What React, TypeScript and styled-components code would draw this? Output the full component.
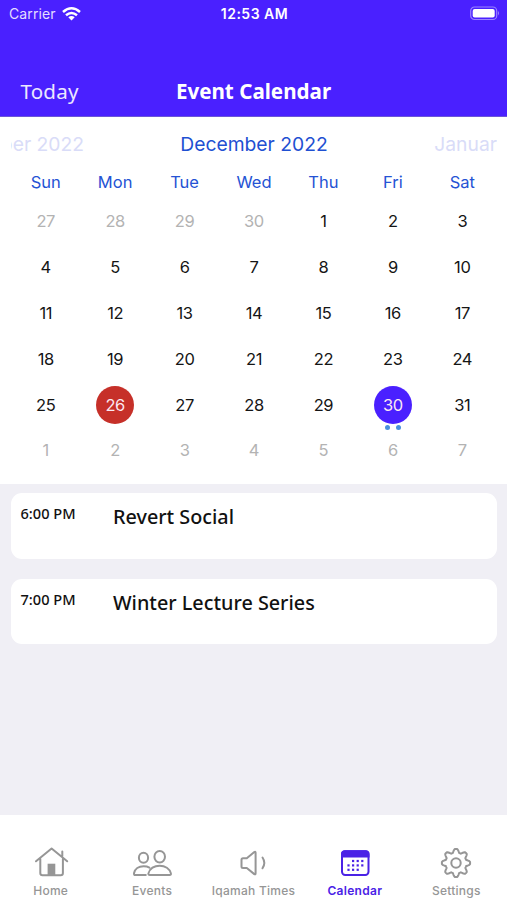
import React from "react";
import styled, { createGlobalStyle } from "styled-components";

const GlobalStyle = createGlobalStyle`
  * { box-sizing: border-box; }
  body { margin: 0; background: #f0eff5; }
`;

const UI = `"Inter", "Liberation Sans", sans-serif`;
const HEAD = `"Noto Sans", "Open Sans", sans-serif`;

const Screen = styled.div`
  width: 507px;
  height: 900px;
  display: flex;
  flex-direction: column;
  background: #f0eff5;
  overflow: hidden;
  font-family: ${UI};
`;

const Header = styled.header`
  height: 117px;
  background: #4a20ff;
  color: #fff;
  border-bottom: 1px solid #6c55d8;
`;

const StatusBar = styled.div`
  height: 27px;
  padding: 0 7px 0 9px;
  display: grid;
  grid-template-columns: 1fr auto 1fr;
  align-items: center;
  font-size: 14px;
  line-height: 27px;
`;

const Carrier = styled.div`
  display: flex;
  align-items: center;
  gap: 6px;
  color: #e4ddff;
  letter-spacing: 0.1px;
`;

const Clock = styled.div`
  font-weight: 600;
  font-size: 14px;
  letter-spacing: 0.5px;
`;

const Battery = styled.svg`
  justify-self: end;
  display: block;
`;

const NavBar = styled.div`
  height: 90px;
  padding: 48px 20px 0;
  display: grid;
  grid-template-columns: 1fr auto 1fr;
  align-items: start;
  font-family: ${HEAD};
  font-size: 20.6px;
  line-height: 32px;
`;

const TodayButton = styled.button`
  justify-self: start;
  border: 0;
  padding: 0 0 0 0.5px;
  background: none;
  color: #ece7ff;
  font: inherit;
  letter-spacing: 0.2px;
`;

const Title = styled.h1`
  margin: 0;
  font-size: inherit;
  line-height: inherit;
  font-weight: 700;
`;

const CalendarPanel = styled.section`
  height: 367px;
  flex: none;
  padding: 0 10px 0 11px;
  background: #fff;
`;

const Months = styled.div`
  height: 54px;
  display: flex;
  align-items: center;
  justify-content: space-between;
  overflow: hidden;
  font-size: 19.3px;
  line-height: 54px;
`;

const Month = styled.div<{ $side?: "left" | "right" }>`
  width: ${(p) => (p.$side ? "73px" : "auto")};
  display: flex;
  justify-content: flex-end;
  overflow: hidden;
  white-space: nowrap;
  color: ${(p) => (p.$side ? "#d9dcf8" : "#1f50d2")};
`;

const WeekdayRow = styled.div`
  display: grid;
  grid-template-columns: repeat(7, 1fr);
  height: 21px;
  align-items: center;
  justify-items: center;
`;

const Weekday = styled.div`
  font-size: 16.5px;
  color: #2553d4;
`;

const Weeks = styled.div`
  padding-top: 6.5px;
  display: grid;
  grid-template-columns: repeat(7, 1fr);
  grid-auto-rows: 45.8px;
  align-items: center;
  justify-items: center;
`;

const Day = styled.div<{ $muted?: boolean; $fill?: string }>`
  position: relative;
  width: 38px;
  height: 38px;
  border-radius: 50%;
  display: flex;
  align-items: center;
  justify-content: center;
  font-size: 16.5px;
  letter-spacing: -0.4px;
  background: ${(p) => p.$fill ?? "transparent"};
  color: ${(p) => (p.$fill ? "#fbe9f2" : p.$muted ? "#b3b3b3" : "#151515")};
`;

const Dots = styled.div`
  position: absolute;
  top: 39px;
  left: 0;
  width: 100%;
  display: flex;
  justify-content: center;
  gap: 5.5px;
`;

const Dot = styled.span`
  width: 5px;
  height: 5px;
  border-radius: 50%;
  background: #4a90dd;
`;

const Agenda = styled.main`
  flex: 1;
  padding: 9px 10px 0 10.5px;
  display: flex;
  flex-direction: column;
  gap: 20px;
`;

const EventCard = styled.article`
  height: 65.7px;
  padding: 8px 10px;
  display: grid;
  grid-template-columns: 92.5px 1fr;
  border-radius: 11px;
  background: #fff;
  color: #111;
  font-family: ${HEAD};
`;

const EventTime = styled.div`
  font-size: 14.6px;
  line-height: 25px;
  font-weight: 500;
`;

const EventName = styled.div`
  font-size: 19.8px;
  line-height: 32px;
  font-weight: 500;
`;

const TabBar = styled.nav`
  height: 85.5px;
  flex: none;
  display: grid;
  grid-template-columns: repeat(5, 1fr);
  background: #fff;
`;

const Tab = styled.div<{ $active?: boolean }>`
  padding-top: 29px;
  display: flex;
  flex-direction: column;
  align-items: center;
  color: ${(p) => (p.$active ? "#4a22e6" : "#969696")};
  font-size: 12px;
  line-height: 18px;
  font-weight: ${(p) => (p.$active ? 600 : 500)};
  letter-spacing: ${(p) => (p.$active ? 0.3 : 0.25)}px;
  white-space: nowrap;
`;

const Icon = styled.svg`
  width: 44px;
  height: 38px;
  flex: none;
  display: block;
  fill: none;
  stroke: currentColor;
  stroke-width: 2;
  stroke-linecap: round;
  stroke-linejoin: round;
`;

const gearPath =
  Array.from({ length: 160 }, (_, i) => {
    const a = (i / 160) * Math.PI * 2;
    const wave = Math.max(-1, Math.min(1, Math.cos(a * 8) * 1.3));
    const r = 12.3 + 1.8 * wave;
    return `${i ? "L" : "M"}${(22 + r * Math.sin(a)).toFixed(2)} ${(19 - r * Math.cos(a)).toFixed(2)}`;
  }).join("") + "Z";

const HomeIcon = () => (
  <Icon viewBox="0 0 44 38">
    <path d="M7 17.300 22.600 4.500l15.600 12.800M11.300 15V29q0 2.200 2.200 2.200h18.200q2.200 0 2.200-2.200V15M33.300 12V7.500" />
    <path d="M18.600 31V19.700h7.700V31z" fill="currentColor" stroke="none" />
  </Icon>
);

const PeopleIcon = () => (
  <Icon viewBox="0 0 44 38">
    <ellipse cx="13.500" cy="13.700" rx="4.600" ry="5" />
    <ellipse cx="29.700" cy="12.700" rx="5.300" ry="5.800" />
    <path d="M15.800 31H5.200Q3.800 31 4 29.300C4.800 25 8.800 22.300 13.600 22.300c2.200 0 4.200.4 5.800 1.300" />
    <path d="M19.800 31H39.600Q41.200 31 40.900 29.400C39.800 24.500 35 21.700 29.700 21.700S19.500 24.500 18.400 29.400Q18.200 31 19.800 31z" />
  </Icon>
);

const SpeakerIcon = () => (
  <Icon viewBox="0 0 44 38">
    <path d="M12 14.200h3.800L23.300 8q1.300-.8 1.300.8V29.300q0 1.600-1.300.8L15.800 24H12q-1.500 0-1.500-1.500v-6.800q0-1.500 1.500-1.500z" />
    <path d="M31.500 13.500q3.600 5.300 0 10.800" />
  </Icon>
);

const CalendarIcon = () => (
  <Icon viewBox="0 0 44 38">
    <rect x="9" y="7.300" width="26.500" height="23.700" rx="3.200" />
    <path d="M8 13.500V10q0-3.700 3.700-3.700h21.100Q36.500 6.300 36.500 10v3.500z" fill="currentColor" stroke="none" />
    <g fill="currentColor" stroke="none">
      {[17, 21.4, 25.8].map((y, row) =>
        [15, 19.6, 24.2, 28.8].map((x, col) =>
          (row === 0 && col === 0) || (row === 2 && col === 3) ? null : (
            <rect key={`${row}-${col}`} x={x - 0.6} y={y - 1.1} width="2.200" height="2.200" />
          )
        )
      )}
    </g>
  </Icon>
);

const GearIcon = () => (
  <Icon viewBox="0 0 44 38">
    <path d={gearPath} />
    <circle cx="22" cy="19" r="4.700" />
  </Icon>
);

const weekdays = ["Sun", "Mon", "Tue", "Wed", "Thu", "Fri", "Sat"];

const days = Array.from({ length: 42 }, (_, i) => {
  if (i < 4) return { key: i, day: 27 + i, muted: true };
  if (i > 34) return { key: i, day: i - 34, muted: true };
  const day = i - 3;
  return {
    key: i,
    day,
    muted: false,
    fill: day === 26 ? "#c63029" : day === 30 ? "#4a20ff" : undefined,
    events: day === 30,
  };
});

const events = [
  { time: "6:00 PM", name: "Revert Social" },
  { time: "7:00 PM", name: "Winter Lecture Series" },
];

const tabs = [
  { label: "Home", icon: <HomeIcon /> },
  { label: "Events", icon: <PeopleIcon /> },
  { label: "Iqamah Times", icon: <SpeakerIcon /> },
  { label: "Calendar", icon: <CalendarIcon />, active: true },
  { label: "Settings", icon: <GearIcon /> },
];

export default function App() {
  return (
    <Screen>
      <GlobalStyle />
      <Header>
        <StatusBar>
          <Carrier>
            Carrier
            <svg width="19" height="14" viewBox="0 0 19 14" fill="none" stroke="#fff" strokeWidth="2.500">
              <path d="M1 5Q9.500-2.400 18 5" />
              <path d="M4 8.300Q9.500 3.600 15 8.300" />
              <path d="M9.500 13.500 6.300 10.300Q9.500 7.800 12.700 10.300z" fill="#fff" stroke="none" />
            </svg>
          </Carrier>
          <Clock>12:53 AM</Clock>
          <Battery width="30" height="15" viewBox="0 0 30 15">
            <rect x="0.700" y="1" width="26" height="12.500" rx="3.800" fill="none" stroke="#9a83ff" strokeWidth="1.200" />
            <rect x="2.700" y="3" width="22" height="8.500" rx="2" fill="#fff" />
            <path d="M28 5q2 2.200 0 4.400z" fill="#9a83ff" />
          </Battery>
        </StatusBar>
        <NavBar>
          <TodayButton>Today</TodayButton>
          <Title>Event Calendar</Title>
        </NavBar>
      </Header>
      <CalendarPanel>
        <Months>
          <Month $side="left">ber 2022</Month>
          <Month>December 2022</Month>
          <Month $side="right">Januar</Month>
        </Months>
        <WeekdayRow>
          {weekdays.map((d) => (
            <Weekday key={d}>{d}</Weekday>
          ))}
        </WeekdayRow>
        <Weeks>
          {days.map((d) => (
            <Day key={d.key} $muted={d.muted} $fill={d.fill}>
              {d.day}
              {d.events && (
                <Dots>
                  <Dot />
                  <Dot />
                </Dots>
              )}
            </Day>
          ))}
        </Weeks>
      </CalendarPanel>
      <Agenda>
        {events.map((e) => (
          <EventCard key={e.name}>
            <EventTime>{e.time}</EventTime>
            <EventName>{e.name}</EventName>
          </EventCard>
        ))}
      </Agenda>
      <TabBar>
        {tabs.map((t) => (
          <Tab key={t.label} $active={t.active}>
            {t.icon}
            {t.label}
          </Tab>
        ))}
      </TabBar>
    </Screen>
  );
}
